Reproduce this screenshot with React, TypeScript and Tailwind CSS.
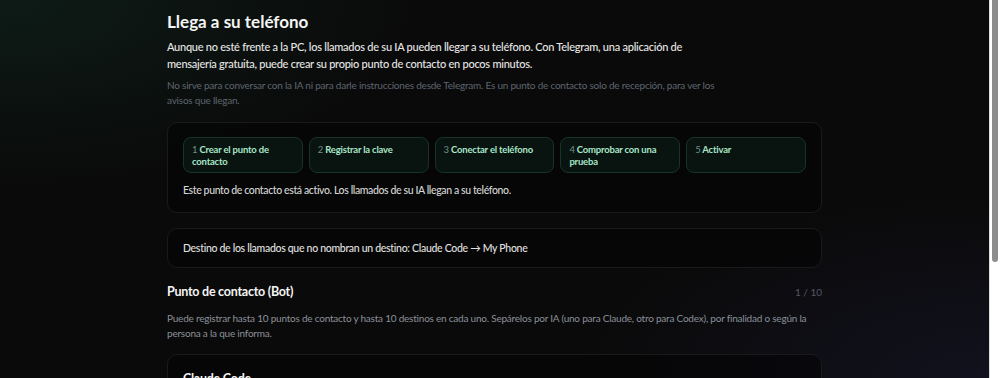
import React from "react";

const steps = [
  { n: 1, label: "Crear el punto de contacto" },
  { n: 2, label: "Registrar la clave" },
  { n: 3, label: "Conectar el teléfono" },
  { n: 4, label: "Comprobar con una prueba" },
  { n: 5, label: "Activar" },
];

export default function App() {
  return (
    <div className="flex h-[378px] w-[1000px] overflow-hidden bg-[#0a0a0a] font-['Lato',sans-serif]">
      <main className="flex-1 overflow-hidden bg-[#0a0a0a] bg-[image:radial-gradient(ellipse_60%_70%_at_0%_0%,rgba(20,60,48,0.35),transparent_70%),radial-gradient(ellipse_60%_70%_at_100%_100%,rgba(40,40,90,0.25),transparent_70%)]">
        <div className="mx-auto w-[655px] pt-[9px]">
          <h1 className="text-[17px] font-bold leading-[26px] text-[#f5f5f5]">
            Llega a su teléfono
          </h1>
          <p className="mt-[3px] text-[11px] font-medium leading-[17px] tracking-[-0.25px] text-[#e6e6e6]">
            Aunque no esté frente a la PC, los llamados de su IA pueden llegar a su teléfono. Con Telegram, una aplicación de
            <br />
            mensajería gratuita, puede crear su propio punto de contacto en pocos minutos.
          </p>
          <p className="mt-[6px] text-[10px] leading-[15px] tracking-[-0.22px] text-[#5e6570]">
            No sirve para conversar con la IA ni para darle instrucciones desde Telegram. Es un punto de contacto solo de recepción, para ver los
            <br />
            avisos que llegan.
          </p>

          <section className="mt-[14px] rounded-[10px] border border-[#1a1a1a] bg-black/40 px-[15px] pb-[13px] pt-[14px]">
            <div className="grid grid-cols-5 gap-[6px]">
              {steps.map((s) => (
                <div
                  key={s.n}
                  className="h-[36px] rounded-[8px] border border-[#16342a] bg-[#09130f] px-[8px] pt-[6px] text-[9.5px] font-bold leading-[12px] tracking-[-0.2px] text-[#a8e6c9]"
                >
                  <span className="font-normal text-[#6f9283]">{s.n}</span> {s.label}
                </div>
              ))}
            </div>
            <p className="mt-[8px] text-[10.5px] font-medium leading-[18px] tracking-[-0.38px] text-[#d6d6d6]">
              Este punto de contacto está activo. Los llamados de su IA llegan a su teléfono.
            </p>
          </section>

          <section className="mt-[15px] rounded-[10px] border border-[#1a1a1a] bg-black/40 px-[15px] py-[10px]">
            <p className="text-[10.5px] font-medium leading-[18px] tracking-[-0.3px] text-[#e0e0e0]">
              Destino de los llamados que no nombran un destino: Claude Code → My Phone
            </p>
          </section>

          <div className="mt-[15px] flex items-center justify-between">
            <h2 className="text-[12.5px] font-bold leading-[18px] tracking-[-0.25px] text-[#f5f5f5]">Punto de contacto (Bot)</h2>
            <span className="text-[10px] leading-[18px] text-[#545860]">1 / 10</span>
          </div>
          <p className="mt-[10px] text-[10px] leading-[15px] tracking-[-0.22px] text-[#8a9099]">
            Puede registrar hasta 10 puntos de contacto y hasta 10 destinos en cada uno. Sepárelos por IA (uno para Claude, otro para Codex), por finalidad o según la persona a la que informa.
          </p>

          <section className="mt-[13px] rounded-[10px] border border-[#1a1a1a] bg-black/40 px-[15px] pt-[15px]">
            <h3 className="text-[12.5px] font-bold leading-[18px] tracking-[-0.25px] text-[#f5f5f5]">Claude Code</h3>
          </section>
        </div>
      </main>
      <div className="flex w-[11px] shrink-0 justify-center border-l border-[#dcdcdc] bg-white">
        <div className="h-[262px] w-[6px] rounded-b-[3px] bg-[#8d8d8d]" />
      </div>
    </div>
  );
}
